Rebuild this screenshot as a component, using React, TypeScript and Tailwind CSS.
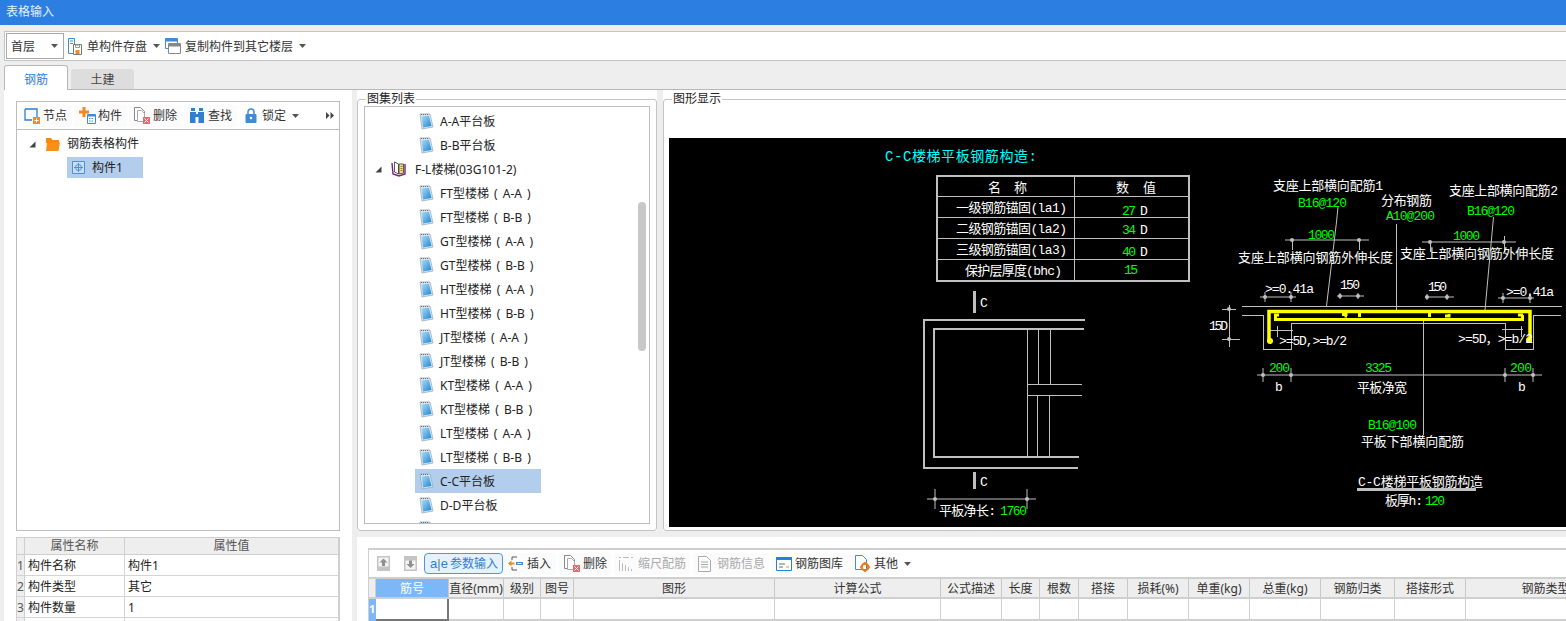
import type { ReactNode } from "react"

const Caret = ({ className = "" }: { className?: string }) => (
    <svg width="7" height="4" viewBox="0 0 7 4" className={className}>
        <path d="M0 0h7L3.5 4z" fill="#555" />
    </svg>
)

const Expander = () => (
    <svg width="7" height="7" viewBox="0 0 7 7">
        <path d="M6.5 .5V6.5H.5z" fill="#444" />
    </svg>
)

const MoreArrows = () => (
    <svg width="8" height="7" viewBox="0 0 8 7">
        <path d="M0 0l3.500 3.500L0 7zM4.500 0L8 3.500 4.500 7z" fill="#444" />
    </svg>
)

const SaveIcon = () => (
    <svg width="14" height="17" viewBox="0 0 14 17" fill="none">
        <path d="M.5.5h6v15h-6z" stroke="#3f8bd8" />
        <path d="M2 3h3M2 5.500h3" stroke="#3f8bd8" />
        <path d="M5.500 6.500h8v10h-8z" fill="#fff" stroke="#777" />
        <path d="M7.500 12h4v4h-4z" fill="#f08a24" />
        <path d="M7.500 7h4v2.500h-4z" stroke="#999" />
    </svg>
)

const CopyIcon = () => (
    <svg width="16" height="16" viewBox="0 0 16 16" fill="none">
        <path d="M.5.5h12v10H.5z" fill="#fff" stroke="#3f8bd8" />
        <path d="M1 1h11v2.500H1z" fill="#3f8bd8" />
        <path d="M3.500 5.500h12v10h-12z" fill="#fff" stroke="#888" />
        <path d="M4 6h11v2.500H4z" fill="#888" />
    </svg>
)

const NodeIcon = () => (
    <svg width="16" height="16" viewBox="0 0 16 16" fill="none">
        <path d="M1 1h12v9M1 1v11h7" stroke="#2f7fd0" strokeWidth="1.300" />
        <path d="M9 9h7v7H9z" fill="#f08a24" />
        <path d="M12.500 10.500v4M10.500 12.500h4" stroke="#fff" />
    </svg>
)

const ComponentIcon = () => (
    <svg width="17" height="17" viewBox="0 0 17 17" fill="none">
        <path d="M3.500 0h3v3.500H10v3H6.500V10h-3V6.500H0v-3h3.500z" fill="#ee8a2a" />
        <path d="M8.500 7.500h8v9h-8z" fill="#fff" stroke="#3f8bd8" />
        <path d="M8.500 7.500h8v2h-8z" fill="#3f8bd8" />
        <path d="M10 11.500h1.500M12.500 11.500H14M10 14h1.500M12.500 14H14" stroke="#3f8bd8" />
    </svg>
)

const DeleteIcon = () => (
    <svg width="16" height="17" viewBox="0 0 16 17" fill="none">
        <path d="M.5.500h6l4 4v9h-10z" fill="#fff" stroke="#888" />
        <path d="M3.500 3.500h4l3 3v8h-7z" fill="#fff" stroke="#aaa" />
        <path d="M9 10h7v7H9z" fill="#e06a6a" />
        <path d="M10.500 11.500l4 4M14.500 11.500l-4 4" stroke="#fff" />
    </svg>
)

const BinocularIcon = () => (
    <svg width="16" height="15" viewBox="0 0 16 15">
        <path d="M2 0h4v3H2zM10 0h4v3h-4zM1 4h6v2h2V4h6v11H9.500V9h-3v6H1z" fill="#2f80cf" />
    </svg>
)

const LockIcon = () => (
    <svg width="12" height="15" viewBox="0 0 12 15" fill="none">
        <path d="M3 6V4a3 3 0 0 1 6 0v2" stroke="#3f8bd8" strokeWidth="1.500" />
        <rect x="0.500" y="6" width="11" height="9" rx="1" fill="#3f8bd8" />
        <circle cx="6" cy="10" r="1.300" fill="#fff" />
    </svg>
)

const FolderIcon = () => (
    <svg width="14" height="13" viewBox="0 0 14 13">
        <path d="M0 0h5l1.500 2H13v3H0z" fill="#f58a12" />
        <path d="M1 4.500h13l-1.500 8.500H0z" fill="#fb8f14" />
    </svg>
)

const PartIcon = () => (
    <svg width="13" height="13" viewBox="0 0 13 13" fill="none">
        <path d="M.5.500h12v12H.5z" fill="#c9def5" stroke="#4f8fd6" />
        <circle cx="6.500" cy="6.500" r="3" stroke="#4f8fd6" />
        <path d="M6.500 2v9M2 6.500h9" stroke="#4f8fd6" />
    </svg>
)

const NoteIcon = () => (
    <svg width="15" height="17" viewBox="0 0 15 17">
        <defs>
            <linearGradient id="note" x1="0" y1="0" x2="1" y2="1">
                <stop offset="0" stopColor="#a9ddf7" />
                <stop offset="1" stopColor="#1c83d3" />
            </linearGradient>
        </defs>
        <path d="M1 1h10l3 13-11 2z" fill="#dfe7ee" stroke="#8da4b8" strokeWidth="0.700" />
        <path d="M2.500 3h7.500l2.500 10-8.500 1.500z" fill="url(#note)" />
        <path d="M2 1.500h8" stroke="#5a6b7a" strokeDasharray="1 1" />
    </svg>
)

const BookIcon = () => (
    <svg width="16" height="16" viewBox="0 0 16 16" fill="none">
        <path d="M1 2l1 11 6 2 6-2V3" stroke="#7a1f7e" strokeWidth="1.400" />
        <path d="M3.500 1l4 2v10l-4-2z" fill="#fff" stroke="#333" strokeWidth="0.800" />
        <path d="M8 3h4.500v9L8 13z" fill="#f5e27a" stroke="#333" strokeWidth="0.800" />
        <path d="M9.500 5.500h2M9.500 7.500h2M9.500 9.500h2" stroke="#8a7a20" />
    </svg>
)

const UpIcon = () => (
    <svg width="13" height="15" viewBox="0 0 13 15">
        <path d="M0 0h13v15H0z" fill="#c4c4c4" />
        <path d="M1.500 1.500h10v9h-10z" fill="#f4f4f4" />
        <path d="M6.500 2.500l4 4H8v3.500H5V6.500H2.500z" fill="#8f8f8f" />
    </svg>
)

const DownIcon = () => (
    <svg width="13" height="15" viewBox="0 0 13 15">
        <path d="M0 0h13v15H0z" fill="#c4c4c4" />
        <path d="M1.500 4.500h10v9h-10z" fill="#f4f4f4" />
        <path d="M5 4.500h3V8h2.500l-4 4-4-4H5z" fill="#8f8f8f" />
    </svg>
)

const InsertIcon = () => (
    <svg width="15" height="15" viewBox="0 0 15 15" fill="none">
        <path d="M4 1h5M4 14h5" stroke="#555" />
        <path d="M4 1v3M4 11v3" stroke="#555" />
        <path d="M0 7.500l3.500-3v2h3v2h-3v2z" fill="#ee8a2a" />
        <path d="M8 6h7v3H8z" fill="#3f8bd8" />
        <path d="M9.500 7.500h4" stroke="#fff" />
    </svg>
)

const ScaleIcon = () => (
    <svg width="14" height="15" viewBox="0 0 14 15" fill="none" stroke="#bbb">
        <path d="M0 1.500h2M4 1.500h6M12 1.500h2" />
        <path d="M.5 4v11M3.500 7v8M6.500 9v6M9.500 11v4M12.500 13v2" />
    </svg>
)

const InfoIcon = () => (
    <svg width="13" height="16" viewBox="0 0 13 16" fill="none" stroke="#aaa">
        <path d="M.5.500h8l4 4v11H.5z" />
        <path d="M3 6h7M3 8.500h7M3 11h7" />
    </svg>
)

const LibraryIcon = () => (
    <svg width="16" height="14" viewBox="0 0 16 14" fill="none">
        <path d="M.5.500h15v13H.5z" fill="#fff" stroke="#2f7fd0" />
        <path d="M0 0h16v3H0z" fill="#2f7fd0" />
        <path d="M3 7h6M3 10h4" stroke="#666" />
        <path d="M10 10h3" stroke="#f08a24" />
    </svg>
)

const OtherIcon = () => (
    <svg width="15" height="17" viewBox="0 0 15 17" fill="none">
        <path d="M.5.500h7l4 4v10H.5z" fill="#fff" stroke="#3f8bd8" />
        <circle cx="10" cy="12" r="3.300" stroke="#ee7a1a" strokeWidth="2.200" />
        <path d="M10 7v1M10 16v1M5 12h1M14 12h1" stroke="#ee7a1a" strokeWidth="1.500" />
    </svg>
)

const AeIcon = () => (
    <span className="w-[20px] shrink-0 flex items-center justify-center text-[13px] leading-none text-[#2f7fd0] font-['Liberation_Sans',sans-serif]">
        a<span className="text-[#777]">|</span>e
    </span>
)

const Btn = ({ w, ml, icon, muted, children }: { w: string; ml: string; icon: ReactNode; muted?: boolean; children: ReactNode }) => (
    <div className={`${w} ${ml} h-[22px] shrink-0 flex items-center rounded-[3px] bg-[#fbfbfb] whitespace-nowrap ${muted ? "text-[#aaa]" : "text-[#333]"}`}>
        <div className="w-[24px] pl-[5px] shrink-0 flex items-center">{icon}</div>
        <span>{children}</span>
    </div>
)

const attrs = [
    { no: 1, name: "构件名称", value: "构件1" },
    { no: 2, name: "构件类型", value: "其它" },
    { no: 3, name: "构件数量", value: "1" },
]

const LeftPanel = () => (
    <div className="w-[348px] shrink-0 bg-white pl-[12px] pr-[12px] pt-[11px] text-[12px]">
        <div className="h-[29px] border border-[#bdbdbd] flex items-center pl-[2px] pr-[5px]">
            <Btn w="w-[53px]" ml="ml-0" icon={<NodeIcon />}>节点</Btn>
            <Btn w="w-[53px]" ml="ml-[2px]" icon={<ComponentIcon />}>构件</Btn>
            <Btn w="w-[53px]" ml="ml-[2px]" icon={<DeleteIcon />}>删除</Btn>
            <Btn w="w-[53px]" ml="ml-[2px]" icon={<BinocularIcon />}>查找</Btn>
            <div className="ml-[8px] flex items-center text-[#333]">
                <LockIcon />
                <span className="ml-[5px]">锁定</span>
                <Caret className="ml-[6px]" />
            </div>
            <div className="ml-auto"><MoreArrows /></div>
        </div>
        <div className="h-[401px] border border-t-0 border-[#bdbdbd] pt-[3px] text-[#222]">
            <div className="h-[22px] flex items-center pl-[12px]">
                <Expander />
                <div className="ml-[10px]"><FolderIcon /></div>
                <span className="ml-[7px]">钢筋表格构件</span>
            </div>
            <div className="ml-[50px] mt-[2px] h-[21px] w-[76px] bg-[#b3cdec] flex items-center pl-[5px]">
                <PartIcon />
                <span className="ml-[7px]">构件1</span>
            </div>
        </div>
        <div className="mt-[6px] border-t border-l border-[#cfcfcf] text-[#222]">
            <div className="h-[17px] flex bg-[#eeeeee] border-b border-[#cfcfcf] text-[#555]">
                <div className="w-[8px] border-r border-[#cfcfcf]" />
                <div className="w-[100px] border-r border-[#cfcfcf] text-center leading-[16px]">属性名称</div>
                <div className="flex-1 border-r-2 border-[#cfcfcf] text-center leading-[16px]">属性值</div>
            </div>
            {attrs.map((a) => (
                <div key={a.no} className="h-[21px] flex border-b border-[#d4d4d4] leading-[22px]">
                    <div className="w-[8px] bg-[#eeeeee] border-r border-[#cfcfcf] text-[#555] overflow-hidden">{a.no}</div>
                    <div className="w-[100px] border-r border-[#d4d4d4] pl-[3px]">{a.name}</div>
                    <div className="flex-1 border-r-2 border-[#cfcfcf] pl-[3px]">{a.value}</div>
                </div>
            ))}
            <div className="h-[10px] flex">
                <div className="w-[8px] bg-[#eeeeee] border-r border-[#cfcfcf]" />
                <div className="w-[100px] border-r border-[#d4d4d4]" />
                <div className="flex-1 border-r-2 border-[#cfcfcf]" />
            </div>
        </div>
    </div>
)

const atlasRows = ["FT", "GT", "HT", "JT", "KT", "LT"].flatMap((t) => [`${t}型楼梯 ( A-A )`, `${t}型楼梯 ( B-B )`])

const NoteRow = ({ label, selected }: { label: string; selected?: boolean }) => (
    <div className={`ml-[50px] w-[126px] h-[24px] shrink-0 flex items-center pl-[4px] ${selected ? "bg-[#b3cdec]" : ""}`}>
        <NoteIcon />
        <span className="ml-[6px] pt-[2px] whitespace-nowrap [word-spacing:2px]">{label}</span>
    </div>
)

const AtlasList = () => (
    <div className="relative w-[300px] shrink-0 bg-white pt-[9px]">
        <div className="relative h-[432px] border border-[#c4c4c4] rounded-[3px] p-[6px]">
            <span className="absolute left-[8px] top-[-8px] bg-white px-px leading-[14px] text-[#222]">图集列表</span>
            <div className="relative h-[418px] border border-[#bdbdbd] overflow-hidden pt-[2px] text-[#222] leading-[18px]">
                <NoteRow label="A-A平台板" />
                <NoteRow label="B-B平台板" />
                <div className="h-[24px] flex items-center pl-[10px]">
                    <Expander />
                    <div className="ml-[9px]"><BookIcon /></div>
                    <span className="ml-[8px] pt-[2px]">F-L楼梯(03G101-2)</span>
                </div>
                {atlasRows.map((r) => (
                    <NoteRow key={r} label={r} />
                ))}
                <NoteRow label="C-C平台板" selected />
                <NoteRow label="D-D平台板" />
                <NoteRow label="" />
                <div className="absolute left-[273px] top-[95px] w-[8px] h-[149px] rounded-full bg-[#c8c8c8]" />
            </div>
        </div>
    </div>
)

const Cad = ({ x, y, w, c = "#fff", s = 13, children }: { x: number; y: number; w?: number; c?: string; s?: number; children: string }) => (
    <text x={x} y={y} fontSize={s} fill={c} textLength={w} textRendering="optimizeSpeed">
        {children}
    </text>
)

const G = "#00ff00"

const Dim = ({ x1, x2, y, dots, tick = 8 }: { x1: number; x2: number; y: number; dots: number[]; tick?: number }) => (
    <g>
        <path d={`M${x1} ${y}H${x2}`} stroke="#c0c0c0" />
        {dots.map((d) => (
            <g key={d}>
                <path d={`M${d} ${y - tick}V${y + tick}`} stroke="#c0c0c0" />
                <circle cx={d} cy={y} r="2" fill="#c0c0c0" />
            </g>
        ))}
    </g>
)

const Drawing = () => (
    <svg viewBox="669 138 897 389" width="897" height="389" className="block font-['Liberation_Mono','Noto_Sans_CJK_SC',monospace]">
        <rect x="669" y="138" width="897" height="389" fill="#000" />
        <Cad x={885} y={161} w={152} c="#00ffff" s={14}>C-C楼梯平板钢筋构造:</Cad>

        {/* parameter table */}
        <g fill="none" stroke="#c0c0c0" shapeRendering="crispEdges">
            <rect x="936.500" y="175.500" width="252" height="105" strokeWidth="2" />
            <path d="M1074.500 175V280M936 196.500H1188M936 217.500H1188M936 238.500H1188M936 259.500H1188" />
        </g>
        <Cad x={988} y={192}>名</Cad>
        <Cad x={1014} y={192}>称</Cad>
        <Cad x={1116} y={192}>数</Cad>
        <Cad x={1143} y={192}>值</Cad>
        <Cad x={956} y={212} w={111}>一级钢筋锚固(la1)</Cad>
        <Cad x={956} y={233} w={111}>二级钢筋锚固(la2)</Cad>
        <Cad x={956} y={254} w={111}>三级钢筋锚固(la3)</Cad>
        <Cad x={965} y={275} w={97}>保护层厚度(bhc)</Cad>
        <Cad x={1122} y={215} w={14} c={G}>27</Cad>
        <Cad x={1140} y={215}>D</Cad>
        <Cad x={1122} y={234} w={14} c={G}>34</Cad>
        <Cad x={1140} y={234}>D</Cad>
        <Cad x={1122} y={256} w={14} c={G}>40</Cad>
        <Cad x={1140} y={256}>D</Cad>
        <Cad x={1124} y={274} w={14} c={G}>15</Cad>

        {/* plan view */}
        <g fill="none" stroke="#c0c0c0" shapeRendering="crispEdges">
            <path d="M974.500 291V313M974.500 472V489" strokeWidth="3" />
            <path d="M1085 320H924V468H1078M1084 329H934V457H1079" strokeWidth="2" />
            <path d="M1027.500 329V457M1038.500 329V384M1050.500 329V384M1037.500 395V457M1049.500 395V457M1027 384.500H1082M1027 395.500H1082" />
        </g>
        <Cad x={980} y={307}>C</Cad>
        <Cad x={980} y={486}>C</Cad>
        <Dim x1={927} x2={1036} y={499} dots={[935, 1027]} tick={10} />
        <Cad x={939} y={515} w={57}>平板净长:</Cad>
        <Cad x={1000} y={515} w={27} c={G}>1760</Cad>

        {/* section */}
        <g fill="none" stroke="#c0c0c0">
            <path shapeRendering="crispEdges" d="M1242 306.500H1562M1242 315.500H1263.500V349.500H1291.500V323.500H1505.500V349.500H1533.500V315.500H1561M1396.500 224V311M1423.500 320V435" />
            <path d="M1338 207L1336.500 222L1326.500 306M1493.500 217L1485 310" />
            <path shapeRendering="crispEdges" d="M1277.500 326V337M1270 330.500H1293M1521.500 326V337M1502 329.500H1523" />
        </g>
        <g fill="none" stroke="#ffff00" strokeWidth="3.500">
            <path d="M1269 342V311.500H1530V342" />
            <path strokeWidth="3" d="M1275.500 315V319.500H1522.500V315" />
            <path strokeWidth="3" d="M1274 315H1279M1518 315H1523M1342 314.500H1346V316H1347M1359.500 312V317M1429.500 312V317M1445 316H1449V314" />
        </g>
        <circle cx="1270" cy="341" r="3" fill="#ffff00" />
        <circle cx="1529" cy="340" r="3" fill="#ffff00" />
        <Dim x1={1285} x2={1369} y={240} dots={[1292, 1359]} tick={0} />
        <path d="M1292.500 240V250M1359.500 240V250M1430.500 242V252M1504.500 236V252" stroke="#c0c0c0" />
        <Dim x1={1422} x2={1516} y={242} dots={[1430, 1504]} tick={0} />
        <Dim x1={1260} x2={1296} y={297} dots={[1265, 1291]} tick={5} />
        <Dim x1={1337} x2={1364} y={296} dots={[1340, 1358]} tick={3} />
        <Dim x1={1425} x2={1454} y={297} dots={[1427, 1447]} tick={3} />
        <Dim x1={1498} x2={1534} y={298} dots={[1503, 1530]} tick={5} />
        <path d="M1222 309.500H1236M1222 339.500H1240M1229.500 305V347" stroke="#c0c0c0" />
        <circle cx="1229" cy="309" r="2" fill="#c0c0c0" />
        <circle cx="1229" cy="339" r="2" fill="#c0c0c0" />
        <Dim x1={1257} x2={1542} y={375} dots={[1263, 1291, 1505, 1533]} tick={7} />

        <Cad x={1273} y={190} w={110}>支座上部横向配筋1</Cad>
        <Cad x={1298} y={207} w={49} c={G}>B16@120</Cad>
        <Cad x={1381} y={205} w={51}>分布钢筋</Cad>
        <Cad x={1386} y={220} w={49} c={G}>A10@200</Cad>
        <Cad x={1449} y={195} w={109}>支座上部横向配筋2</Cad>
        <Cad x={1467} y={215} w={48} c={G}>B16@120</Cad>
        <Cad x={1308} y={239} w={27} c={G}>1000</Cad>
        <Cad x={1453} y={240} w={27} c={G}>1000</Cad>
        <Cad x={1238} y={262} w={155}>支座上部横向钢筋外伸长度</Cad>
        <Cad x={1400} y={258} w={154}>支座上部横向钢筋外伸长度</Cad>
        <Cad x={1265} y={293} w={49}>{">=0.41a"}</Cad>
        <Cad x={1340} y={289} w={20}>150</Cad>
        <Cad x={1428} y={291} w={19}>150</Cad>
        <Cad x={1506} y={296} w={48}>{">=0.41a"}</Cad>
        <Cad x={1209} y={330} w={19}>15D</Cad>
        <Cad x={1279} y={345} w={68}>{">=5D,>=b/2"}</Cad>
        <Cad x={1458} y={343} w={75}>{">=5D，>=b/2"}</Cad>
        <Cad x={1269} y={372} w={21} c={G}>200</Cad>
        <Cad x={1365} y={372} w={27} c={G}>3325</Cad>
        <Cad x={1510} y={372} w={22} c={G}>200</Cad>
        <Cad x={1275} y={391}>b</Cad>
        <Cad x={1357} y={392} w={50}>平板净宽</Cad>
        <Cad x={1518} y={391}>b</Cad>
        <Cad x={1368} y={429} w={49} c={G}>B16@100</Cad>
        <Cad x={1361} y={446} w={103}>平板下部横向配筋</Cad>
        <Cad x={1358} y={486} w={125}>C-C楼梯平板钢筋构造</Cad>
        <path d="M1357 489H1476" stroke="#c0c0c0" strokeWidth="3" shapeRendering="crispEdges" />
        <Cad x={1385} y={505} w={38}>板厚h:</Cad>
        <Cad x={1425} y={505} w={20} c={G}>120</Cad>
    </svg>
)

const DrawingPanel = () => (
    <div className="w-[910px] shrink-0 bg-white pt-[9px]">
        <div className="relative h-[432px] border border-[#c4c4c4] rounded-[3px] pl-[5px] pt-[38px]">
            <span className="absolute left-[8px] top-[-8px] bg-white px-px leading-[14px] text-[#222]">图形显示</span>
            <Drawing />
        </div>
    </div>
)

const cols = [
    { w: "w-[73px]", label: "筋号" },
    { w: "w-[55px]", label: "直径(mm)" },
    { w: "w-[37px]", label: "级别" },
    { w: "w-[33px]", label: "图号" },
    { w: "w-[201px]", label: "图形" },
    { w: "w-[166px]", label: "计算公式" },
    { w: "w-[61px]", label: "公式描述" },
    { w: "w-[38px]", label: "长度" },
    { w: "w-[39px]", label: "根数" },
    { w: "w-[49px]", label: "搭接" },
    { w: "w-[61px]", label: "损耗(%)" },
    { w: "w-[61px]", label: "单重(kg)" },
    { w: "w-[71px]", label: "总重(kg)" },
    { w: "w-[74px]", label: "钢筋归类" },
    { w: "w-[71px]", label: "搭接形式" },
    { w: "w-[160px]", label: "钢筋类型" },
]

const RebarTable = () => (
    <div className="flex-1 min-h-0 bg-white pl-[11px] pt-[11px]">
        <div className="w-[1300px] border-t-2 border-l border-[#cfcfcf]">
            <div className="h-[27px] flex items-center pl-[3px] text-[#333]">
                <div className="w-[22px] flex justify-center"><UpIcon /></div>
                <div className="w-[22px] ml-[5px] flex justify-center"><DownIcon /></div>
                <div className="ml-[3px] w-[79px] h-[21px] shrink-0 rounded-[4px] border border-[#4a97e8] bg-[#e6f1fc] flex items-center pl-[4px] text-[#2f7fd0]">
                    <AeIcon />
                    <span className="ml-px">参数输入</span>
                </div>
                <Btn w="w-[53px]" ml="ml-0" icon={<InsertIcon />}>插入</Btn>
                <Btn w="w-[52px]" ml="ml-[3px]" icon={<DeleteIcon />}>删除</Btn>
                <Btn w="w-[76px]" ml="ml-[3px]" icon={<ScaleIcon />} muted>缩尺配筋</Btn>
                <Btn w="w-[76px]" ml="ml-[3px]" icon={<InfoIcon />} muted>钢筋信息</Btn>
                <Btn w="w-[77px]" ml="ml-[2px]" icon={<LibraryIcon />}>钢筋图库</Btn>
                <Btn w="w-[50px]" ml="ml-[2px]" icon={<OtherIcon />}>其他</Btn>
                <Caret className="ml-[4px]" />
            </div>
            <div className="h-[22px] flex border-t-2 border-b-2 border-[#cfcfcf] bg-[#eeeeee] text-[#333]">
                <div className="w-[7px] shrink-0 border-r border-[#cfcfcf]" />
                {cols.map((c, i) => (
                    <div key={c.label} className={`${c.w} shrink-0 border-r border-[#c8c8c8] text-center leading-[20px] whitespace-nowrap ${i === 0 ? "bg-[#7db7f8] text-white" : ""}`}>
                        {c.label}
                    </div>
                ))}
            </div>
            <div className="h-[22px] flex">
                <div className="w-[7px] shrink-0 bg-[#7db7f8] text-white font-bold text-[11px] leading-[20px] overflow-hidden">1</div>
                {cols.map((c, i) => (
                    <div key={c.label} className={`${c.w} shrink-0 border-b-2 ${i === 0 ? "border-r-2 border-[#777]" : "border-r border-[#cfcfcf]"}`} />
                ))}
            </div>
        </div>
    </div>
)

export default function App() {
    return (
        <div className="w-[1566px] h-[621px] overflow-hidden flex flex-col bg-[#eeeeee] text-[12px] font-['Noto_Sans','Noto_Sans_CJK_SC',sans-serif]">
            <div className="h-[25px] shrink-0 bg-[#2c7fe0] pl-[6px] leading-[24px] text-[#e6f0fc]">表格输入</div>

            <div className="mt-[6px] ml-[4px] h-[30px] shrink-0 border border-r-0 border-[#c4c4c4] bg-white flex items-center pl-[1px] text-[#333]">
                <div className="w-[58px] h-[26px] border border-[#a8a8a8] flex items-center justify-between pl-[4px] pr-[5px]">
                    <span className="pt-px">首层</span>
                    <Caret />
                </div>
                <div className="ml-[4px]"><SaveIcon /></div>
                <span className="ml-[5px] pt-px">单构件存盘</span>
                <Caret className="ml-[6px]" />
                <div className="ml-[5px]"><CopyIcon /></div>
                <span className="ml-[4px] pt-px">复制构件到其它楼层</span>
                <Caret className="ml-[6px]" />
            </div>

            <div className="mt-[4px] ml-[4px] h-[25px] shrink-0 flex items-end border-b border-[#b8b8b8]">
                <div className="w-[64px] h-[25px] mb-[-1px] rounded-t-[3px] border border-b-0 border-[#b8b8b8] bg-white text-center leading-[28px] text-[#2c7fe0]">钢筋</div>
                <div className="ml-[3px] w-[63px] h-[20px] rounded-t-[3px] bg-[#dddddd] text-center leading-[22px] text-[#444]">土建</div>
            </div>

            <div className="flex-1 min-h-0 ml-[4px] flex">
                <LeftPanel />
                <div className="w-[5px] shrink-0" />
                <div className="flex-1 min-w-0 flex flex-col overflow-hidden">
                    <div className="h-[441px] shrink-0 flex">
                        <AtlasList />
                        <div className="w-[6px] shrink-0" />
                        <DrawingPanel />
                    </div>
                    <div className="h-[6px] shrink-0" />
                    <RebarTable />
                </div>
            </div>
        </div>
    )
}
